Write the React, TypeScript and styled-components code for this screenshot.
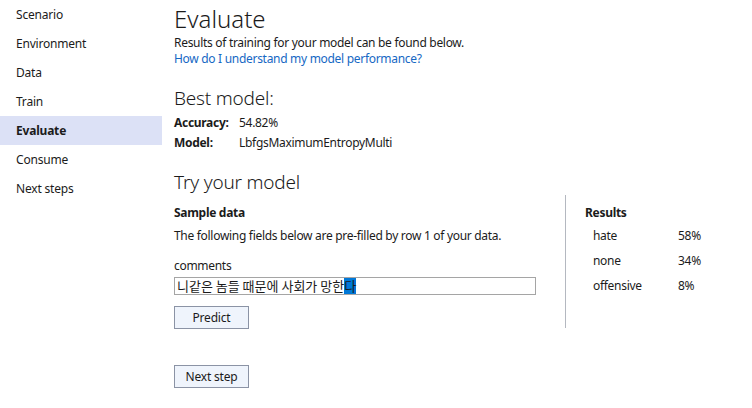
import React from "react";
import styled, { createGlobalStyle } from "styled-components";

const Global = createGlobalStyle`
  html, body { margin: 0; padding: 0; background: #ffffff; }
  body {
    font-family: "Segoe UI", "Noto Sans", "Noto Sans CJK KR", sans-serif;
    font-size: 12px;
    color: #1b1b1b;
  }
  *, *::before, *::after { box-sizing: border-box; }
`;

const Page = styled.div`
  display: flex;
  width: 752px;
  height: 408px;
  overflow: hidden;
`;

const Sidebar = styled.nav`
  width: 162px;
  flex: none;
  display: flex;
  flex-direction: column;
`;

const NavItem = styled.div<{ $active?: boolean }>`
  height: 29px;
  line-height: 29px;
  padding-left: 16px;
  font-size: 12px;
  letter-spacing: -0.2px;
  font-weight: ${(p) => (p.$active ? 700 : 400)};
  background: ${(p) => (p.$active ? "#dce1f6" : "transparent")};
  color: #1b1b1b;
`;

const Main = styled.main`
  flex: 1;
  padding-left: 12px;
  display: flex;
  flex-direction: column;
  letter-spacing: -0.3px;
`;

const Title = styled.h1`
  margin: 2px 0 0 0;
  font-size: 24px;
  font-weight: 300;
  line-height: 33px;
  letter-spacing: 0;
  color: #1b1b1b;
`;

const Text = styled.div`
  font-size: 12px;
  line-height: 16px;
  height: 16px;
`;

const Link = styled.a`
  display: block;
  font-size: 12px;
  line-height: 16px;
  height: 16px;
  color: #1668c4;
  text-decoration: none;
`;

const Heading = styled.h2<{ $top: number }>`
  margin: ${(p) => p.$top}px 0 0 0;
  font-size: 19px;
  font-weight: 300;
  line-height: 26px;
  letter-spacing: -0.2px;
  color: #1b1b1b;
`;

const InfoGrid = styled.div`
  display: grid;
  grid-template-columns: 65px auto;
  margin-top: 2px;
`;

const InfoLabel = styled.div`
  font-weight: 700;
  line-height: 20px;
`;

const InfoValue = styled.div`
  line-height: 20px;
`;

const TryRow = styled.div`
  display: flex;
`;

const LeftCol = styled.div`
  width: 391px;
  flex: none;
  display: flex;
  flex-direction: column;
  padding-top: 10px;
`;

const RightCol = styled.div`
  border-left: 1px solid #b4b8c0;
  height: 133px;
  padding-left: 19px;
  padding-top: 10px;
  display: flex;
  flex-direction: column;
  width: 160px;
`;

const SubHeading = styled.div`
  font-weight: 700;
  line-height: 16px;
`;

const Para = styled.div<{ $top: number }>`
  margin-top: ${(p) => p.$top}px;
  line-height: 16px;
`;

const TextBox = styled.div`
  margin-top: 3px;
  width: 362px;
  height: 18px;
  border: 1px solid #a5a5a5;
  font-family: "Noto Sans CJK KR", "Segoe UI", sans-serif;
  font-size: 13px;
  letter-spacing: 0;
  line-height: 16px;
  padding-left: 2px;
  white-space: nowrap;
  overflow: hidden;
  color: #1b1b1b;
`;

const Selected = styled.span`
  background: #0078d7;
  color: #1b1b1b;
`;

const Button = styled.button<{ $top: number }>`
  margin-top: ${(p) => p.$top}px;
  width: 75px;
  height: 23px;
  border: 1px solid #8b93a5;
  background: #eff4fc;
  font-family: "Segoe UI", "Noto Sans", sans-serif;
  font-size: 12px;
  letter-spacing: -0.2px;
  color: #1b1b1b;
  padding: 0;
  cursor: pointer;
`;

const ResultList = styled.div`
  margin-top: 2px;
  display: flex;
  flex-direction: column;
`;

const ResultRow = styled.div`
  display: grid;
  grid-template-columns: 85px auto;
  padding-left: 8px;
  line-height: 25px;
`;

const results = [
  { label: "hate", value: "58%" },
  { label: "none", value: "34%" },
  { label: "offensive", value: "8%" },
];

const nav = ["Scenario", "Environment", "Data", "Train", "Evaluate", "Consume", "Next steps"];

export default function App() {
  return (
    <Page>
      <Global />
      <Sidebar>
        {nav.map((n) => (
          <NavItem key={n} $active={n === "Evaluate"}>
            {n}
          </NavItem>
        ))}
      </Sidebar>
      <Main>
        <Title>Evaluate</Title>
        <Text>Results of training for your model can be found below.</Text>
        <Link href="#">How do I understand my model performance?</Link>
        <Heading $top={18}>Best model:</Heading>
        <InfoGrid>
          <InfoLabel>Accuracy:</InfoLabel>
          <InfoValue>54.82%</InfoValue>
          <InfoLabel>Model:</InfoLabel>
          <InfoValue>LbfgsMaximumEntropyMulti</InfoValue>
        </InfoGrid>
        <Heading $top={16}>Try your model</Heading>
        <TryRow>
          <LeftCol>
            <SubHeading>Sample data</SubHeading>
            <Para $top={7}>The following fields below are pre-filled by row 1 of your data.</Para>
            <Para $top={14}>comments</Para>
            <TextBox>
              니같은 놈들 때문에 사회가 망한<Selected>다</Selected>
            </TextBox>
            <Button $top={11}>Predict</Button>
            <Button $top={36}>Next step</Button>
          </LeftCol>
          <RightCol>
            <SubHeading>Results</SubHeading>
            <ResultList>
              {results.map((r) => (
                <ResultRow key={r.label}>
                  <span>{r.label}</span>
                  <span>{r.value}</span>
                </ResultRow>
              ))}
            </ResultList>
          </RightCol>
        </TryRow>
      </Main>
    </Page>
  );
}
